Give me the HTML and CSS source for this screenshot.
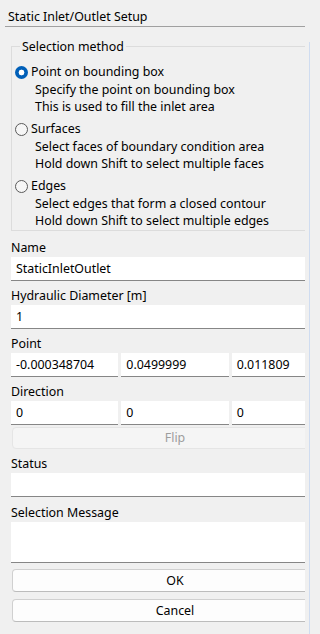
FILE: index.html
```html
<!DOCTYPE html>
<html>
<head>
<meta charset="utf-8">
<link rel="stylesheet" href="styles.css">
</head>
<body>
<div class="clip">
  <div class="header">Static Inlet/Outlet Setup</div>
  <div class="content">
    <div class="group">
      <div class="group-title">Selection method</div>
      <div class="options">
        <div class="option">
          <div class="radio-row"><span class="radio checked"></span><span>Point on bounding box</span></div>
          <div class="desc">Specify the point on bounding box</div>
          <div class="desc">This is used to fill the inlet area</div>
        </div>
        <div class="option">
          <div class="radio-row"><span class="radio"></span><span>Surfaces</span></div>
          <div class="desc">Select faces of boundary condition area</div>
          <div class="desc">Hold down Shift to select multiple faces</div>
        </div>
        <div class="option">
          <div class="radio-row"><span class="radio"></span><span>Edges</span></div>
          <div class="desc">Select edges that form a closed contour</div>
          <div class="desc">Hold down Shift to select multiple edges</div>
        </div>
      </div>
    </div>

    <div class="field first">
      <div class="label">Name</div>
      <div class="input">StaticInletOutlet</div>
    </div>
    <div class="field">
      <div class="label">Hydraulic Diameter [m]</div>
      <div class="input">1</div>
    </div>
    <div class="field">
      <div class="label">Point</div>
      <div class="triple">
        <div class="input">-0.000348704</div>
        <div class="input">0.0499999</div>
        <div class="input">0.011809</div>
      </div>
    </div>
    <div class="field">
      <div class="label">Direction</div>
      <div class="triple">
        <div class="input">0</div>
        <div class="input">0</div>
        <div class="input">0</div>
      </div>
    </div>
    <div class="button disabled flip">Flip</div>
    <div class="field">
      <div class="label">Status</div>
      <div class="input"></div>
    </div>
    <div class="field status-gap">
      <div class="label">Selection Message</div>
      <div class="input area"></div>
    </div>
    <div class="button ok">OK</div>
    <div class="button cancel">Cancel</div>
  </div>
</div>
</body>
</html>
```

FILE: styles.css
```css
html, body {
  margin: 0;
  width: 310px;
  height: 634px;
}
body {
  background: #f0f0f0 linear-gradient(#cfdcf0, #cfdcf0) no-repeat right 0 top 42px / 1px calc(100% - 42px);
  font-family: "Noto Sans", "Open Sans", sans-serif;
  font-size: 12.4px;
  color: #000;
  overflow: hidden;
}
.clip {
  width: 305px;
  height: 634px;
  overflow: hidden;
}
.header {
  margin-left: 5px;
  padding: 8px 0 1px 3px;
  line-height: 17px;
  border-bottom: 1px solid #a0a0a0;
  white-space: nowrap;
}
.content {
  width: 328px;
  margin-left: 11px;
  padding-top: 19px;
}
.group {
  border: 1px solid #dcdcdc;
  padding: 0 0 1px 3px;
}
.group-title {
  margin: -9px 0 0 5px;
  padding: 0 2px;
  width: max-content;
  background: #f0f0f0;
  line-height: 17px;
}
.options {
  margin-top: 8px;
  display: flex;
  flex-direction: column;
  gap: 5px;
}
.radio-row {
  display: flex;
  align-items: center;
  gap: 3px;
  height: 18px;
  line-height: 18px;
}
.radio {
  width: 13px;
  height: 13px;
  box-sizing: border-box;
  border-radius: 50%;
  border: 1px solid #5a5a5a;
  background: #f6f6f6;
  flex: none;
}
.radio.checked {
  border: none;
  background: radial-gradient(circle, #ffffff 0 2.6px, #005fb8 3.2px);
}
.desc {
  padding-left: 20px;
  line-height: 17px;
  white-space: nowrap;
}
.field {
  margin-top: 6px;
}
.field.first {
  margin-top: 8px;
}
.field.status-gap {
  margin-top: 7px;
}
.label {
  line-height: 17px;
  margin-bottom: 1px;
}
.input {
  height: 24px;
  box-sizing: border-box;
  background: #ffffff;
  border-bottom: 1px solid #868686;
  padding-left: 5px;
  line-height: 23px;
  white-space: nowrap;
  overflow: hidden;
}
.input.area {
  height: 41px;
}
.triple {
  display: grid;
  grid-template-columns: repeat(3, 1fr);
  gap: 3px;
}
.button {
  margin-left: 1px;
  width: 326px;
  box-sizing: border-box;
  border: 1px solid #d0d0d0;
  border-bottom-color: #bcbcbc;
  border-radius: 4px;
  background: #fdfdfd;
  text-align: center;
}
.button.disabled {
  background: #f5f5f5;
  border-color: #e5e5e5;
  color: #9d9d9d;
}
.flip {
  margin-top: 2px;
  height: 22px;
  line-height: 20px;
}
.ok {
  margin-top: 6px;
  height: 23px;
  line-height: 21px;
}
.cancel {
  margin-top: 7px;
  height: 23px;
  line-height: 21px;
}
```
